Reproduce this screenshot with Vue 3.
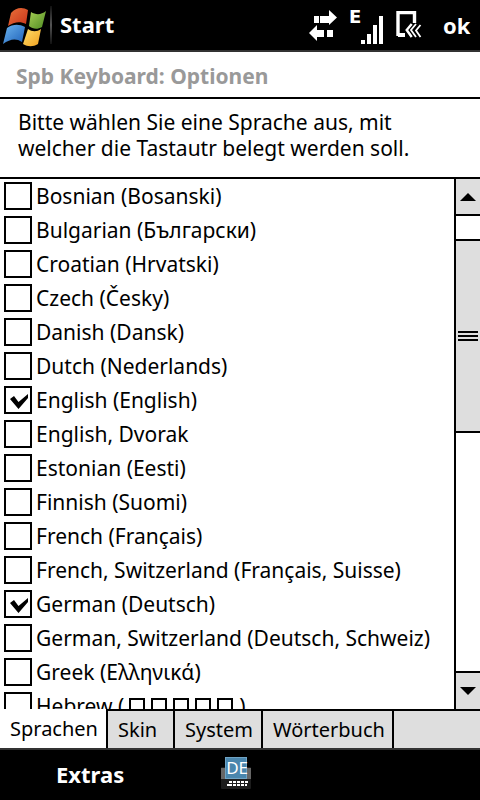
<template>
  <div class="phone">
    <header class="top-bar">
      <svg class="flag" viewBox="0 0 44 40">
        <defs>
          <linearGradient id="fr" x1="0" y1="0" x2="1" y2="1"><stop offset="0" stop-color="#e8713a" /><stop offset="1" stop-color="#c8331a" /></linearGradient>
          <linearGradient id="fg" x1="0" y1="0" x2="1" y2="1"><stop offset="0" stop-color="#a8cf55" /><stop offset="1" stop-color="#4d8c22" /></linearGradient>
          <linearGradient id="fb" x1="0" y1="0" x2="1" y2="1"><stop offset="0" stop-color="#6cb4ee" /><stop offset="1" stop-color="#1c5fb8" /></linearGradient>
          <linearGradient id="fy" x1="0" y1="0" x2="1" y2="1"><stop offset="0" stop-color="#ffdf6a" /><stop offset="1" stop-color="#f0a020" /></linearGradient>
        </defs>
        <path fill="url(#fr)" d="M8 6 C13 0 20 0 25 3 L23 17 C17 14 11 15 5 19 Z" />
        <path fill="url(#fg)" d="M28 5 C33 8 38 8 43 4 L39 20 C34 23 30 22 26 19 Z" />
        <path fill="url(#fb)" d="M4 21 C10 17 16 17 22 20 L19 35 C13 31 7 32 0 37 Z" />
        <path fill="url(#fy)" d="M25 22 C29 25 34 25 38 22 L35 37 C30 40 25 40 20 37 Z" />
      </svg>
      <span class="divider"></span>
      <span class="start">Start</span>
      <div class="tray">
        <svg class="tray-arrows" viewBox="0 0 28 31" fill="#fff">
          <path d="M5 6h5v7H5zM11 6h9V0l8 7.5-8 7.5V13h-9z" />
          <path d="M0 23l8-8v5h7v7H8v4zM18 20h6v7h-6z" />
        </svg>
        <div class="signal">
          <span class="edge">E</span>
          <svg class="bars" viewBox="0 0 22 28" fill="#fff">
            <rect x="0" y="24" width="4" height="4" />
            <rect x="6" y="18" width="4" height="10" />
            <rect x="12" y="9" width="4" height="19" />
            <rect x="18" y="0" width="4" height="28" />
          </svg>
        </div>
        <svg class="tray-card" viewBox="0 0 26 28" fill="none" stroke="#fff">
          <path d="M2 25 V1.5 H18.5 V12" stroke-width="3.4" />
          <path d="M2 24 H9" stroke-width="4" />
          <path d="M15.7 13 L10.7 19 L15.7 26" stroke-width="2.4" />
          <path d="M20 13 L15 19 L20 26 M24.5 14 L20 19.5 L24.5 26" stroke-width="1.8" />
        </svg>
        <span class="ok">ok</span>
      </div>
    </header>

    <h1 class="title">Spb Keyboard: Optionen</h1>
    <p class="intro">Bitte wählen Sie eine Sprache aus, mit welcher die Tastautr belegt werden soll.</p>

    <div class="list-wrap">
      <ul class="lang-list">
        <li v-for="lang in languages" :key="lang.name" class="lang-row">
          <span class="box">
            <svg v-if="lang.checked" viewBox="0 0 24 24" class="tick">
              <path d="M4 11 L8 8 L12.5 14 L22 6 L22 10 L12.5 21 Z" />
            </svg>
          </span>
          <span class="lang-name">{{ lang.name }}<template v-if="lang.tofu"><span v-for="n in 5" :key="n" class="tofu"></span>)</template></span>
        </li>
      </ul>
      <div class="scrollbar">
        <div class="sb-btn sb-up"><span class="tri-up"></span></div>
        <div class="sb-track sb-before"></div>
        <div class="sb-thumb"><span class="grip"></span></div>
        <div class="sb-track sb-after"></div>
        <div class="sb-btn sb-down"><span class="tri-down"></span></div>
      </div>
    </div>

    <nav class="tabs">
      <span v-for="(tab, i) in tabs" :key="tab" class="tab" :class="{ active: i === 0 }">{{ tab }}</span>
      <span class="tab-rest"></span>
    </nav>

    <footer class="bottom-bar">
      <span class="extras">Extras</span>
      <div class="kbd-icon">
        <svg class="kbd" viewBox="0 0 30 22">
          <rect x="0" y="0" width="30" height="22" rx="1" fill="#1c1c1c" />
          <rect x="0" y="1" width="5" height="11" fill="#666" />
          <rect x="25" y="1" width="5" height="11" fill="#666" />
          <g fill="#fff">
            <rect x="8" y="14" width="19" height="2" />
            <rect x="6" y="17" width="20" height="2" />
          </g>
          <g fill="#1c1c1c">
            <rect x="11" y="14" width="1" height="5" />
            <rect x="15" y="14" width="1" height="5" />
            <rect x="19" y="14" width="1" height="5" />
            <rect x="23" y="14" width="1" height="5" />
          </g>
        </svg>
        <span class="de">DE</span>
      </div>
    </footer>
  </div>
</template>

<script setup>
const languages = [
  { name: 'Bosnian (Bosanski)' },
  { name: 'Bulgarian (Български)' },
  { name: 'Croatian (Hrvatski)' },
  { name: 'Czech (Česky)' },
  { name: 'Danish (Dansk)' },
  { name: 'Dutch (Nederlands)' },
  { name: 'English (English)', checked: true },
  { name: 'English, Dvorak' },
  { name: 'Estonian (Eesti)' },
  { name: 'Finnish (Suomi)' },
  { name: 'French (Français)' },
  { name: 'French, Switzerland (Français, Suisse)' },
  { name: 'German (Deutsch)', checked: true },
  { name: 'German, Switzerland (Deutsch, Schweiz)' },
  { name: 'Greek (Ελληνικά)' },
  { name: 'Hebrew (', tofu: true }
]

const tabs = ['Sprachen', 'Skin', 'System', 'Wörterbuch']
</script>

<style>
html, body {
  margin: 0;
  background: #fff;
}
</style>

<style scoped>
.phone {
  width: 480px;
  height: 800px;
  display: flex;
  flex-direction: column;
  overflow: hidden;
  font-family: "Noto Sans", "DejaVu Sans", sans-serif;
  color: #000;
  background: #fff;
}

.top-bar {
  height: 50px;
  flex-shrink: 0;
  display: flex;
  align-items: center;
  background: #000;
  border-bottom: 2px solid #333;
}

.flag {
  width: 44px;
  height: 40px;
  margin: 3px 0 0 3px;
  flex-shrink: 0;
}

.divider {
  width: 2px;
  height: 38px;
  margin-left: 3px;
  background: linear-gradient(#111, #555 50%, #111);
}

.start {
  margin: 0 0 2px 8px;
  color: #fff;
  font-size: 22px;
  font-weight: 700;
}

.tray {
  margin-left: auto;
  display: flex;
  align-items: center;
  color: #fff;
}

.tray-arrows {
  width: 28px;
  height: 31px;
  margin-top: 1px;
}

.signal {
  width: 34px;
  height: 34px;
  margin: 4px 0 0 12px;
  position: relative;
}

.edge {
  position: absolute;
  left: 0;
  top: -4px;
  font-family: "DejaVu Sans", sans-serif;
  font-size: 18px;
  font-weight: 700;
}

.bars {
  position: absolute;
  right: 0;
  bottom: 0;
  width: 22px;
  height: 28px;
}

.tray-card {
  width: 26px;
  height: 28px;
  margin-left: 13px;
}

.ok {
  width: 26px;
  margin: 0 11px 0 21px;
  font-size: 22px;
  font-weight: 700;
}

.title {
  flex-shrink: 0;
  margin: 0;
  padding: 2px 0 0 16px;
  box-sizing: border-box;
  display: flex;
  align-items: center;
  font-size: 21px;
  font-weight: 700;
  color: #999;
  background: #fff;
  border-bottom: 2px solid #000;
  height: 47px;
}

.intro {
  height: 80px;
  flex-shrink: 0;
  box-sizing: border-box;
  margin: 0;
  padding: 10px 40px 0 18px;
  font-size: 21px;
  line-height: 26px;
  border-bottom: 2px solid #000;
}

.list-wrap {
  flex: 1;
  min-height: 0;
  display: flex;
  overflow: hidden;
}

.lang-list {
  flex: 1;
  min-width: 0;
  margin: 0;
  padding: 3px 0 0 4px;
  list-style: none;
}

.lang-row {
  height: 34px;
  display: flex;
  align-items: flex-start;
}

.box {
  width: 28px;
  height: 28px;
  box-sizing: border-box;
  flex-shrink: 0;
  border: 2px solid #000;
}

.tick {
  display: block;
  width: 24px;
  height: 24px;
  fill: #000;
}

.lang-name {
  margin-left: 4px;
  font-size: 21px;
  line-height: 28px;
  white-space: nowrap;
}

.tofu {
  display: inline-block;
  width: 16px;
  height: 20px;
  box-sizing: border-box;
  margin-right: 6px;
  vertical-align: -4px;
  border: 2px solid #000;
}

.tofu:first-child {
  margin-left: 5px;
}

.scrollbar {
  width: 26px;
  box-sizing: border-box;
  flex-shrink: 0;
  display: flex;
  flex-direction: column;
  border-left: 2px solid #000;
}

.sb-btn {
  flex-shrink: 0;
  display: flex;
  align-items: center;
  justify-content: center;
  background: #dedede;
}

.sb-up {
  height: 35px;
  border-bottom: 2px solid #000;
}

.sb-down {
  height: 36px;
  border-top: 2px solid #000;
}

.tri-up {
  border-left: 8px solid transparent;
  border-right: 8px solid transparent;
  border-bottom: 8px solid #000;
}

.tri-down {
  border-left: 8px solid transparent;
  border-right: 8px solid transparent;
  border-top: 8px solid #000;
}

.sb-before {
  height: 23px;
  flex-shrink: 0;
}

.sb-after {
  flex: 1;
}

.sb-thumb {
  height: 190px;
  flex-shrink: 0;
  display: flex;
  align-items: center;
  justify-content: center;
  background: #dedede;
  border-top: 2px solid #000;
  border-bottom: 2px solid #000;
}

.grip {
  width: 20px;
  height: 10px;
  box-sizing: border-box;
  border-top: 2px solid #000;
  border-bottom: 2px solid #000;
  background: linear-gradient(#000, #000) center / 100% 2px no-repeat;
}

.tabs {
  height: 37px;
  flex-shrink: 0;
  display: grid;
  grid-template-columns: 108px 67px 88px 131px 1fr;
  background: #dedede;
  border-top: 2px solid #000;
}

.tab {
  box-sizing: border-box;
  display: flex;
  align-items: center;
  padding-left: 10px;
  font-size: 20px;
  border-right: 2px solid #000;
  background: #dedede;
}

.tab.active {
  margin-top: -2px;
  background: #fff;
}

.bottom-bar {
  height: 52px;
  flex-shrink: 0;
  box-sizing: border-box;
  display: flex;
  align-items: center;
  background: #000;
  border-top: 2px solid #333;
}

.extras {
  margin: 0 0 2px 56px;
  color: #fff;
  font-size: 22px;
  font-weight: 700;
}

.kbd-icon {
  width: 30px;
  height: 32px;
  margin: -4px 0 0 97px;
  position: relative;
}

.kbd {
  position: absolute;
  left: 0;
  bottom: 0;
  width: 30px;
  height: 22px;
}

.de {
  position: absolute;
  left: 4px;
  top: 0;
  width: 20px;
  height: 20px;
  line-height: 20px;
  text-align: center;
  font-size: 17px;
  color: #fff;
  background: #4a86ad;
  border: 1px solid #6fa3c4;
}
</style>
